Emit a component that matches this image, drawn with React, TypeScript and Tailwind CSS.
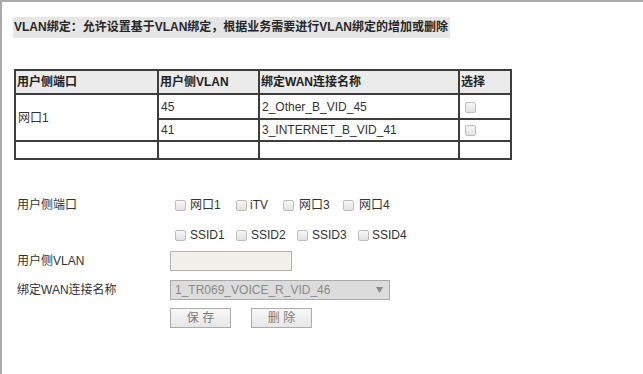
import React from "react";

const Cb = ({ className = "" }: { className?: string }) => (
  <span
    className={
      "inline-block w-[11px] h-[11px] shrink-0 rounded-[2px] border border-[#bdbdbd] bg-gradient-to-b from-[#f7f7f7] to-[#e2e2e2] " +
      className
    }
  />
);

const Item = ({ label, w, gap = 4 }: { label: string; w: string; gap?: number }) => (
  <div className={"flex items-center " + w}>
    <Cb />
    <span className={gap === 3 ? "ml-[3px]" : gap === 5 ? "ml-[5px]" : "ml-[4px]"}>{label}</span>
  </div>
);

export default function App() {
  const cell = "border-[#3d3d3d] text-[12px] text-[#333] pl-[2px] flex items-center";
  const head = "border-[#3d3d3d] bg-[#ebebeb] text-[12px] font-bold text-[#222] pl-[1px] flex items-center";
  return (
    <div className="w-[643px] h-[374px] bg-white border-t-2 border-l-2 border-[#ababab] font-['Liberation_Sans','Noto_Sans_CJK_SC',sans-serif] overflow-hidden">
      <div className="pl-[11px] pt-[15px]">
        <div className="w-fit h-[21px] leading-[21px] bg-[#e6e6e6] pl-[1px] pr-[2px] text-[12px] font-bold text-[#262626]">
          VLAN绑定：允许设置基于VLAN绑定，根据业务需要进行VLAN绑定的增加或删除
        </div>

        <div className="ml-[1px] mt-[31px] w-[498px] border-2 border-[#3d3d3d] grid grid-cols-[143px_101px_200px_50px] grid-rows-[24px_25px_22px_16px]">
          <div className={head + " border-r-2 border-b-2"}>用户侧端口</div>
          <div className={head + " border-r-2 border-b-2"}>用户侧VLAN</div>
          <div className={head + " border-r-2 border-b-2"}>绑定WAN连接名称</div>
          <div className={head + " border-b-2"}>选择</div>

          <div className={cell + " row-span-2 border-r-2 border-b-2"}>网口1</div>
          <div className={cell + " border-r-2 border-b-2"}>45</div>
          <div className={cell + " border-r-2 border-b-2"}>2_Other_B_VID_45</div>
          <div className={cell + " border-b-2 pl-[5px]"}>
            <Cb className="mt-[1px]" />
          </div>

          <div className={cell + " border-r-2 border-b-2"}>41</div>
          <div className={cell + " border-r-2 border-b-2"}>3_INTERNET_B_VID_41</div>
          <div className={cell + " border-b-2 pl-[5px]"}>
            <Cb className="mt-[1px]" />
          </div>

          <div className={cell + " border-r-2"}></div>
          <div className={cell + " border-r-2"}></div>
          <div className={cell + " border-r-2"}></div>
          <div className={cell}></div>
        </div>

        <div className="mt-[30px] flex flex-col text-[12px] text-[#333]">
          <div className="flex h-[30px] items-center">
            <div className="w-[157px] pl-[4px]">用户侧端口</div>
            <div className="flex items-center ml-[5px]">
              <Item label="网口1" w="w-[61px]" />
              <Item label="iTV" w="w-[47px]" gap={3} />
              <Item label="网口3" w="w-[60px]" gap={5} />
              <Item label="网口4" w="w-[60px]" gap={5} />
            </div>
          </div>
          <div className="flex h-[30px] items-center">
            <div className="w-[157px]"></div>
            <div className="flex items-center ml-[5px]">
              <Item label="SSID1" w="w-[61px]" />
              <Item label="SSID2" w="w-[61px]" />
              <Item label="SSID3" w="w-[61px]" />
              <Item label="SSID4" w="w-[61px]" gap={3} />
            </div>
          </div>
          <div className="flex h-[20px] items-center mt-[1px]">
            <div className="w-[157px] pl-[4px]">用户侧VLAN</div>
            <div className="w-[122px] h-[20px] border border-[#b3b3b3] bg-[#f1f0eb]"></div>
          </div>
          <div className="flex h-[20px] items-center mt-[9px]">
            <div className="w-[157px] pl-[4px]">绑定WAN连接名称</div>
            <div className="w-[220px] h-[20px] border border-[#a9a9a9] bg-[#dcdcdc] flex items-center justify-between pl-[4px] pr-[6px] text-[#8a8a8a]">
              <span>1_TR069_VOICE_R_VID_46</span>
              <svg width="7" height="6" viewBox="0 0 7 6">
                <path d="M0 0 L7 0 L3.5 6 Z" fill="#8a8a8a" />
              </svg>
            </div>
          </div>
          <div className="flex h-[20px] items-center mt-[8px]">
            <div className="w-[157px]"></div>
            <div className="w-[61px] h-[20px] border border-[#ababab] bg-gradient-to-b from-[#f8f8f8] to-[#e6e6e6] flex items-center justify-center text-[#7a7a7a]">
              保 存
            </div>
            <div className="ml-[20px] w-[61px] h-[20px] border border-[#ababab] bg-gradient-to-b from-[#f8f8f8] to-[#e6e6e6] flex items-center justify-center text-[#7a7a7a]">
              删 除
            </div>
          </div>
        </div>
      </div>
    </div>
  );
}
